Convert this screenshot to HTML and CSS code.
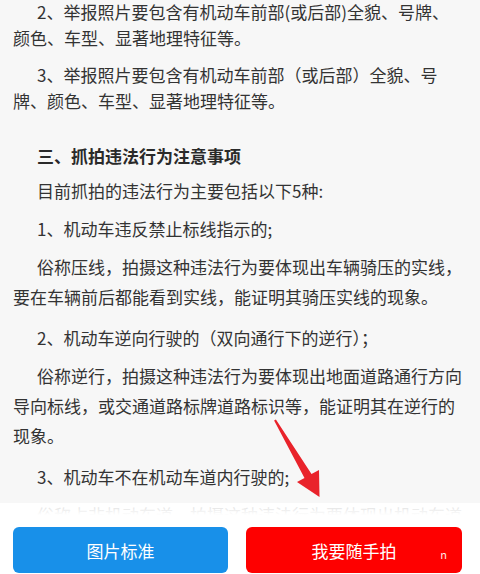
FILE: index.html
```html
<!DOCTYPE html>
<html lang="zh-CN">
<head>
<meta charset="utf-8">
<title>随手拍须知</title>
<link rel="stylesheet" href="styles.css">
</head>
<body>
<div class="page">
  <article class="content">
    <p class="para tight indent">2、举报照片要包含有机动车前部(或后部)全貌、号牌、<br>颜色、车型、显著地理特征等。</p>
    <p class="para tight indent">3、举报照片要包含有机动车前部（或后部）全貌、号<br>牌、颜色、车型、显著地理特征等。</p>
    <h3 class="heading indent">三、抓拍违法行为注意事项</h3>
    <p class="para indent">目前抓拍的违法行为主要包括以下5种:</p>
    <p class="para indent">1、机动车违反禁止标线指示的;</p>
    <p class="para multi indent">俗称压线，拍摄这种违法行为要体现出车辆骑压的实线，<br>要在车辆前后都能看到实线，能证明其骑压实线的现象。</p>
    <p class="para indent">2、机动车逆向行驶的（双向通行下的逆行）；</p>
    <p class="para multi indent">俗称逆行，拍摄这种违法行为要体现出地面道路通行方向<br>导向标线，或交通道路标牌道路标识等，能证明其在逆行的<br>现象。</p>
    <p class="para indent">3、机动车不在机动车道内行驶的;</p>
    <p class="para indent">俗称占非机动车道，拍摄这种违法行为要体现出机动车道</p>
  </article>
  <div class="bar">
    <button class="btn btn-blue">图片标准</button>
    <button class="btn btn-red">我要随手拍<span class="mark">n</span></button>
  </div>
  <svg class="arrow" width="480" height="574" viewBox="0 0 480 574" aria-hidden="true">
    <polygon points="275.9,419.5 311.5,474 319,470 319.5,497 297,482 304.5,478 274.1,420.5" fill="#e9232b"/>
  </svg>
</div>
</body>
</html>
```

FILE: styles.css
```css
html, body {
  margin: 0;
  padding: 0;
  background: #ffffff;
}

.page {
  position: relative;
  width: 480px;
  height: 574px;
  overflow: hidden;
  display: grid;
  grid-template-rows: 503px 71px;
  font-family: "Noto Sans CJK SC", "Noto Sans", sans-serif;
  color: #333333;
}

.content {
  background: #f7f7f7;
  padding: 0 10px 0 13px;
}

.para {
  margin: 0 0 8px;
  font-size: 17px;
  line-height: 30px;
  white-space: nowrap;
}

.para.multi {
  margin-bottom: 11px;
}

.para.tight {
  line-height: 26px;
  margin-bottom: 12px;
  margin-top: -1px;
}

.indent {
  text-indent: 24px;
}

.heading {
  margin: 27px 0 5px;
  font-size: 17px;
  line-height: 30px;
  font-weight: 700;
  color: #2a2a2a;
}

.bar {
  position: relative;
  z-index: 1;
  display: grid;
  grid-template-columns: 215px 216px;
  column-gap: 18px;
  padding: 24px 18px 1px 13px;
  background: linear-gradient(rgba(255,255,255,0.8) 0, #ffffff 12px);
}

.btn {
  position: relative;
  border: 0;
  border-radius: 6px;
  height: 46px;
  font-family: "Noto Sans CJK SC", "Noto Sans", sans-serif;
  font-size: 17px;
  color: #ffffff;
  padding: 0;
}

.btn-blue {
  background: #1890e9;
}

.btn-red {
  background: #fe0000;
}

.mark {
  position: absolute;
  right: 15px;
  top: 20px;
  font-size: 11px;
  line-height: 14px;
  color: #ffe6e6;
}

.arrow {
  position: absolute;
  left: 0;
  top: 0;
  z-index: 2;
  pointer-events: none;
}
```
